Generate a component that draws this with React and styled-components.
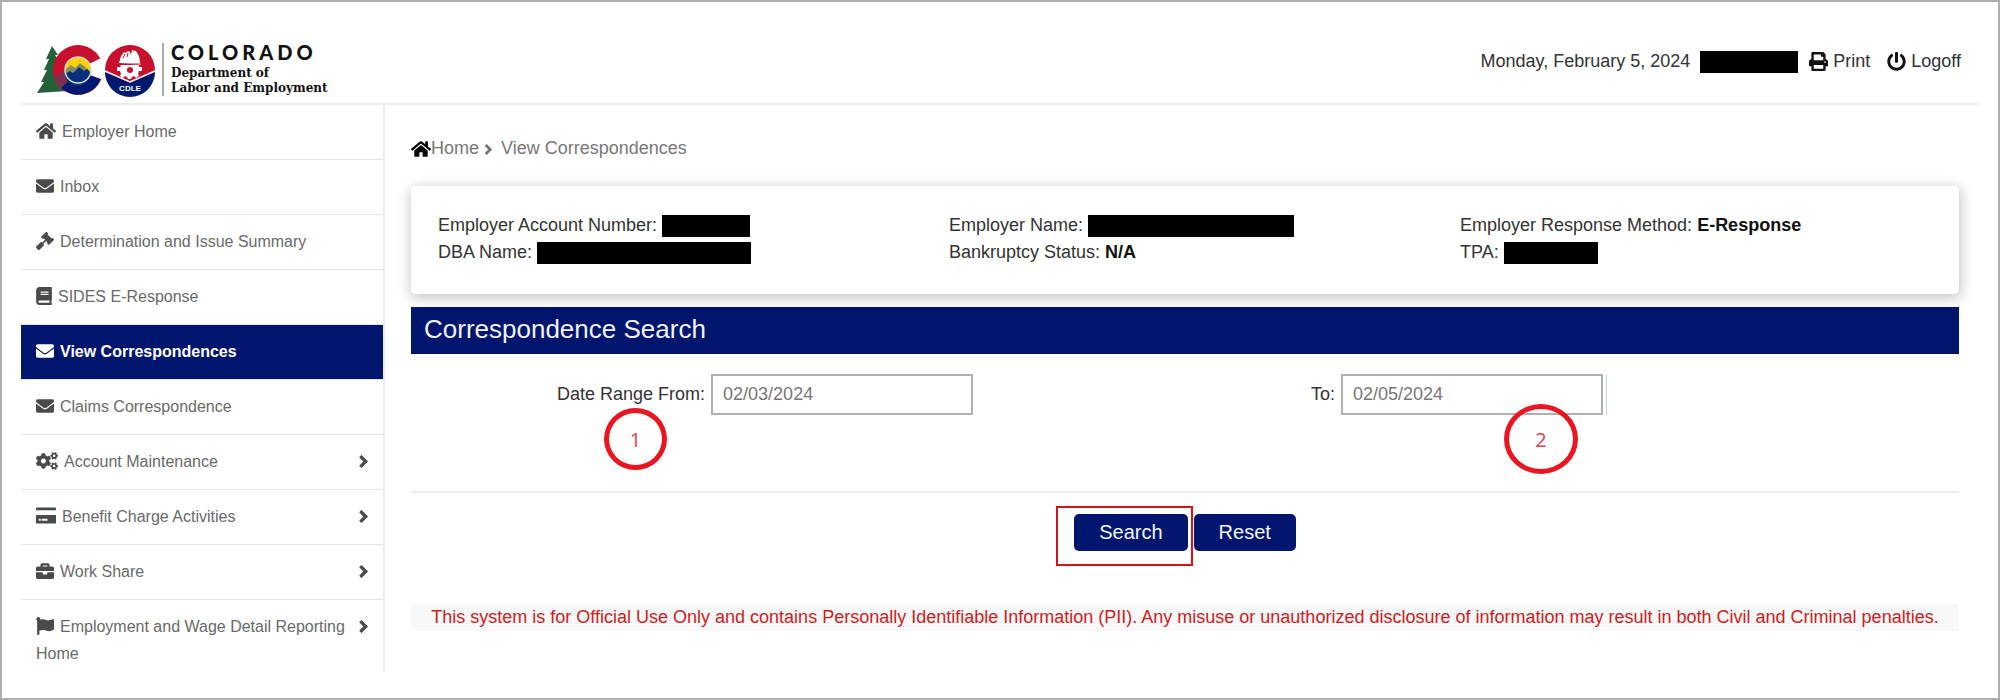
import React from "react";
import styled, { createGlobalStyle } from "styled-components";
import {
  FaHome,
  FaEnvelope,
  FaGavel,
  FaBook,
  FaCogs,
  FaBriefcase,
  FaFlag,
  FaPrint,
  FaPowerOff
} from "react-icons/fa";

const navy = "#00166e";
const line = "#ececec";

const GlobalStyle = createGlobalStyle`
  * {
    box-sizing: border-box;
  }
  html,
  body,
  #root {
    height: 100%;
  }
  body {
    margin: 0;
    background: #fff;
    color: #333;
    font-family: "Liberation Sans", Arial, sans-serif;
    font-size: 18px;
    line-height: 27px;
  }
`;

const Page = styled.div`
  min-height: 100%;
  padding: 0 19px 24px;
  border: 2px solid #aeaeae;
`;

const Header = styled.header`
  display: flex;
  align-items: center;
  justify-content: space-between;
  height: 103px;
  padding: 18px 18px 0 16px;
  border-bottom: 2px solid ${line};
`;

const Brand = styled.a`
  display: flex;
  align-items: center;
  margin-top: 16px;
  color: #111;
  text-decoration: none;
`;

const BrandText = styled.span`
  display: flex;
  flex-direction: column;
  margin-left: 3px;
  padding-left: 7px;
  border-left: 2px solid #aaa;
`;

const State = styled.span`
  margin-bottom: 5px;
  font-family: Lato, sans-serif;
  font-size: 20px;
  font-weight: 900;
  line-height: 18px;
  letter-spacing: 4px;
`;

const Department = styled.span`
  font-family: "DejaVu Serif", serif;
  font-size: 12px;
  font-weight: 700;
  line-height: 15px;
`;

const Tools = styled.div`
  display: flex;
  align-items: center;
`;

const Tool = styled.a`
  display: flex;
  align-items: center;
  gap: 5px;
  margin-left: ${(props) => props.$gap}px;
  color: #333;
  text-decoration: none;
  svg {
    color: #111;
  }
`;

const Redacted = styled.span`
  display: inline-block;
  width: ${(props) => props.$width}px;
  height: 22px;
  margin-left: ${(props) => props.$gap || 5}px;
  background: #000;
  vertical-align: middle;
`;

const Body = styled.div`
  display: flex;
  align-items: flex-start;
`;

const Sidebar = styled.nav`
  flex: 0 0 364px;
  border-right: 2px solid ${line};
`;

const MenuItem = styled.a`
  display: flex;
  align-items: flex-start;
  justify-content: space-between;
  padding: 13px 14px 14px 15px;
  border-bottom: 1px solid #e4e4e4;
  background: ${(props) => (props.$active ? navy : "#fff")};
  color: ${(props) => (props.$active ? "#fff" : "#6a6a6a")};
  font-size: 16px;
  font-weight: ${(props) => (props.$active ? 700 : 400)};
  text-decoration: none;
  &:last-child {
    padding-bottom: 4px;
    border-bottom: 0;
  }
  > span > svg {
    height: 18px;
    margin-right: 6px;
    color: ${(props) => (props.$active ? "#fff" : "#4a4a4a")};
    vertical-align: -3px;
  }
  > svg {
    flex: none;
    margin-top: 7px;
    color: #4a4a4a;
  }
`;

const Main = styled.main`
  flex: 1;
  min-width: 0;
  padding: 30px 20px 0 26px;
`;

const Breadcrumb = styled.div`
  display: flex;
  align-items: center;
  color: #777;
  a {
    display: flex;
    align-items: center;
    color: #777;
    text-decoration: none;
  }
  a svg {
    color: #000;
  }
  > svg {
    margin: 2px 8px 0 3px;
  }
`;

const Card = styled.section`
  display: grid;
  grid-template-columns: repeat(3, 1fr);
  column-gap: 12px;
  margin-top: 24px;
  padding: 26px 0 28px 27px;
  border-radius: 5px;
  box-shadow: 1px 3px 14px 1px rgba(0, 0, 0, 0.24);
  strong {
    color: #111;
  }
`;

const Title = styled.h1`
  margin: 13px 0 0;
  padding: 6px 13px 9px;
  background: ${navy};
  color: #f1f1f8;
  font-size: 26px;
  font-weight: 400;
  line-height: 32px;
`;

const Fields = styled.div`
  display: grid;
  grid-template-columns: 146px 754px 1fr;
  padding: 20px 0 76px;
  border-bottom: 2px solid ${line};
`;

const Field = styled.div`
  position: relative;
  grid-column: ${(props) => props.$column};
  display: flex;
  align-items: center;
`;

const DateInput = styled.input`
  width: 262px;
  height: 41px;
  margin-left: 6px;
  padding: 0 10px;
  border: 2px solid #b0b0b0;
  background: #fff;
  color: #777;
  font: inherit;
`;

const Rule = styled.span`
  height: 40px;
  margin-left: 3px;
  border-left: 1px solid #c2d2e8;
`;

const Marker = styled.span`
  position: absolute;
  left: ${(props) => props.$left}px;
  top: ${(props) => props.$top}px;
  display: flex;
  align-items: center;
  justify-content: center;
  width: ${(props) => props.$width}px;
  height: ${(props) => props.$height}px;
  border: 5px solid #ea1520;
  border-radius: 50%;
  color: #e0404c;
  font-family: "Open Sans", sans-serif;
  font-size: 20px;
`;

const Actions = styled.div`
  display: flex;
  justify-content: center;
  gap: 6px;
  padding-top: 21px;
`;

const Button = styled.button`
  height: 37px;
  padding: 0 25px;
  border: 0;
  border-radius: 5px;
  background: ${navy};
  color: #f4f4fa;
  font: inherit;
  font-size: 20px;
`;

const Highlight = styled.span`
  position: relative;
  display: flex;
  &::after {
    content: "";
    position: absolute;
    top: -8px;
    right: -5px;
    bottom: -15px;
    left: -18px;
    border: 2px solid #d8121c;
    pointer-events: none;
  }
`;

const Notice = styled.p`
  margin: 53px 0 0;
  background: #f8f8f8;
  color: #d01c1c;
  text-align: center;
`;

const Logo = () => (
  <svg width="122" height="56" viewBox="0 0 122 56" aria-hidden="true">
    <path
      d="M15 4l6 9-3 0 6 9-3 0 6 12-3 0 6 15-30 2 7-11-3 0 6-12-3 0 5-11-3 0z"
      fill="#24613b"
    />
    <circle cx="41" cy="28" r="25" fill="#c8102e" />
    <path d="M24 46A25 25 0 0 0 64 37L54 33 41 28z" fill="#001970" />
    <path d="M17 35L24 46 33 38 28 29z" fill="#7b3052" />
    <path d="M50 23L62 17 66 17V37L64 37 50 32z" fill="#fff" />
    <circle cx="41" cy="28" r="13" fill="#ffd100" />
    <path d="M28 28l6-5 4 3 5-5 10 8a12 12 0 0 1-25 0z" fill="#7d9163" />
    <path d="M28 32l5-3 3 2 6-6 5 4 3-2 3 3a12 12 0 0 1-25 3z" fill="#0b2f79" />
    <circle cx="41" cy="28" r="13" fill="none" stroke="#d9dcc8" strokeWidth="1.5" />
    <circle cx="93" cy="28" r="25" fill="#c8102e" />
    <path d="M68 30l25 11 25-11a25 25 0 0 1-50 0z" fill="#001970" />
    <path d="M68 29l25 11 25-11" fill="none" stroke="#fff" strokeWidth="1.5" />
    <path
      d="M82 21l2-7 3-4 2 1 2-2 2 1 1 3 1-5 4 1 3 5 1 6 1 3z"
      fill="#fff"
    />
    <path
      d="M84 23h18l0 2 3 0 0 4-3 0-1 3 1 2-3 2-2-2-2 1-1 2h-3l-1-2-2-1-2 2-3-2 1-2-1-3-3 0v-4l3 0z"
      fill="#fff"
    />
    <circle cx="93" cy="28" r="3" fill="#c8102e" />
    <path d="M86 16l2-4M90 15l1-4M81 22h23" stroke="#c8102e" fill="none" />
    <text
      x="93"
      y="49"
      textAnchor="middle"
      fill="#fff"
      fontFamily="Liberation Sans, sans-serif"
      fontSize="8"
      fontWeight="700"
    >
      CDLE
    </text>
  </svg>
);

const Chevron = ({ size }) => (
  <svg
    width={size}
    height={size}
    viewBox="0 0 12 12"
    fill="none"
    stroke="currentColor"
    strokeWidth="3"
  >
    <path d="M4 1l5 5-5 5" />
  </svg>
);

const ChargeCard = ({ size }) => (
  <svg width={size} height={size} viewBox="0 0 21 18" fill="currentColor">
    <path d="M1 0h19q1 0 1 1v2H0V1q0-1 1-1zM0 8h21v8q0 1-1 1H1q-1 0-1-1zM3 12v2h2v-2zM6 12v2h6v-2z" fillRule="evenodd" />
  </svg>
);

const menu = [
  { label: "Employer Home", icon: FaHome, size: 20 },
  { label: "Inbox", icon: FaEnvelope, size: 18 },
  { label: "Determination and Issue Summary", icon: FaGavel, size: 18 },
  { label: "SIDES E-Response", icon: FaBook, size: 16 },
  { label: "View Correspondences", icon: FaEnvelope, size: 18, active: true },
  { label: "Claims Correspondence", icon: FaEnvelope, size: 18 },
  { label: "Account Maintenance", icon: FaCogs, size: 22, more: true },
  { label: "Benefit Charge Activities", icon: ChargeCard, size: 20, more: true },
  { label: "Work Share", icon: FaBriefcase, size: 18, more: true },
  {
    label: "Employment and Wage Detail Reporting Home",
    icon: FaFlag,
    size: 18,
    more: true
  }
];

export default function App() {
  return (
    <Page>
      <GlobalStyle />
      <Header>
        <Brand href="#">
          <Logo />
          <BrandText>
            <State>COLORADO</State>
            <Department>Department of</Department>
            <Department>Labor and Employment</Department>
          </BrandText>
        </Brand>
        <Tools>
          <span>Monday, February 5, 2024</span>
          <Redacted $width={98} $gap={10} />
          <Tool href="#" $gap={11}>
            <FaPrint size={19} />
            Print
          </Tool>
          <Tool href="#" $gap={17}>
            <FaPowerOff size={19} />
            Logoff
          </Tool>
        </Tools>
      </Header>
      <Body>
        <Sidebar>
          {menu.map(({ label, icon: Icon, size, active, more }) => (
            <MenuItem key={label} href="#" $active={active}>
              <span>
                <Icon size={size} />
                {label}
              </span>
              {more && <Chevron size={13} />}
            </MenuItem>
          ))}
        </Sidebar>
        <Main>
          <Breadcrumb>
            <a href="#">
              <FaHome size={20} />
              Home
            </a>
            <Chevron size={11} />
            <span>View Correspondences</span>
          </Breadcrumb>
          <Card>
            <div>
              <div>
                Employer Account Number:
                <Redacted $width={88} />
              </div>
              <div>
                DBA Name:
                <Redacted $width={214} />
              </div>
            </div>
            <div>
              <div>
                Employer Name:
                <Redacted $width={206} />
              </div>
              <div>
                Bankruptcy Status: <strong>N/A</strong>
              </div>
            </div>
            <div>
              <div>
                Employer Response Method: <strong>E-Response</strong>
              </div>
              <div>
                TPA:
                <Redacted $width={94} />
              </div>
            </div>
          </Card>
          <Title>Correspondence Search</Title>
          <form onSubmit={(e) => e.preventDefault()}>
            <Fields>
              <Field $column={2}>
                <label htmlFor="from">Date Range From:</label>
                <DateInput id="from" defaultValue="02/03/2024" />
                <Marker $left={47} $top={34} $width={63} $height={62}>
                  1
                </Marker>
              </Field>
              <Field $column={3}>
                <label htmlFor="to">To:</label>
                <DateInput id="to" defaultValue="02/05/2024" />
                <Rule />
                <Marker $left={193} $top={30} $width={74} $height={70}>
                  2
                </Marker>
              </Field>
            </Fields>
            <Actions>
              <Highlight>
                <Button type="submit">Search</Button>
              </Highlight>
              <Button type="reset">Reset</Button>
            </Actions>
          </form>
          <Notice>
            This system is for Official Use Only and contains Personally
            Identifiable Information (PII). Any misuse or unauthorized
            disclosure of information may result in both Civil and Criminal
            penalties.
          </Notice>
        </Main>
      </Body>
    </Page>
  );
}
